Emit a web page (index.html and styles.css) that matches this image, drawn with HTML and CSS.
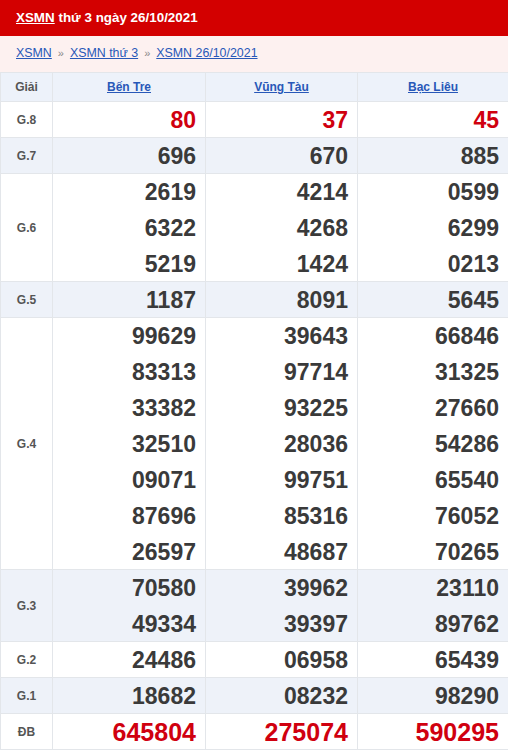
FILE: index.html
```html
<!DOCTYPE html>
<html lang="vi">
<head>
<meta charset="utf-8">
<link rel="stylesheet" href="styles.css">
</head>
<body>
<div class="box">
  <h2 class="title"><a href="#">XSMN</a> thứ 3 ngày 26/10/2021</h2>
  <div class="crumbs">
    <a href="#">XSMN</a><span class="sep">»</span><a href="#">XSMN thứ 3</a><span class="sep">»</span><a href="#">XSMN 26/10/2021</a>
  </div>
  <table class="kq">
    <colgroup><col class="c0"><col class="c1"><col class="c2"><col class="c3"></colgroup>
    <thead>
      <tr><th>Giải</th><th><a href="#">Bến Tre</a></th><th><a href="#">Vũng Tàu</a></th><th><a href="#">Bạc Liêu</a></th></tr>
    </thead>
    <tbody>
      <tr><td class="g">G.8</td><td class="n red"><div>80</div></td><td class="n red"><div>37</div></td><td class="n red"><div>45</div></td></tr>
      <tr class="alt"><td class="g">G.7</td><td class="n"><div>696</div></td><td class="n"><div>670</div></td><td class="n"><div>885</div></td></tr>
      <tr><td class="g">G.6</td><td class="n"><div>2619</div><div>6322</div><div>5219</div></td><td class="n"><div>4214</div><div>4268</div><div>1424</div></td><td class="n"><div>0599</div><div>6299</div><div>0213</div></td></tr>
      <tr class="alt"><td class="g">G.5</td><td class="n"><div>1187</div></td><td class="n"><div>8091</div></td><td class="n"><div>5645</div></td></tr>
      <tr><td class="g">G.4</td>
        <td class="n"><div>99629</div><div>83313</div><div>33382</div><div>32510</div><div>09071</div><div>87696</div><div>26597</div></td>
        <td class="n"><div>39643</div><div>97714</div><div>93225</div><div>28036</div><div>99751</div><div>85316</div><div>48687</div></td>
        <td class="n"><div>66846</div><div>31325</div><div>27660</div><div>54286</div><div>65540</div><div>76052</div><div>70265</div></td></tr>
      <tr class="alt"><td class="g">G.3</td><td class="n"><div>70580</div><div>49334</div></td><td class="n"><div>39962</div><div>39397</div></td><td class="n"><div>23110</div><div>89762</div></td></tr>
      <tr><td class="g">G.2</td><td class="n"><div>24486</div></td><td class="n"><div>06958</div></td><td class="n"><div>65439</div></td></tr>
      <tr class="alt"><td class="g">G.1</td><td class="n"><div>18682</div></td><td class="n"><div>08232</div></td><td class="n"><div>98290</div></td></tr>
      <tr><td class="g">ĐB</td><td class="n red db"><div>645804</div></td><td class="n red db"><div>275074</div></td><td class="n red db"><div>590295</div></td></tr>
    </tbody>
  </table>
</div>
</body>
</html>
```
FILE: styles.css
```css
html, body {
  margin: 0;
  padding: 0;
  background: #ffffff;
  font-family: "Liberation Sans", Arial, sans-serif;
}
.box {
  width: 508px;
}
.title {
  margin: 0;
  height: 36px;
  line-height: 35px;
  padding: 0 16px;
  background: #d30000;
  color: #ffffff;
  font-size: 13.4px;
  font-weight: bold;
}
.title a {
  color: #ffffff;
  text-decoration: underline;
}
.crumbs {
  height: 36px;
  line-height: 35px;
  padding: 0 16px;
  background: #fdf1f0;
  font-size: 12.4px;
}
.crumbs a {
  color: #2858b8;
  text-decoration: underline;
}
.crumbs .sep {
  color: #888888;
  margin: 0 6px;
  font-size: 11px;
}
.kq {
  width: 508px;
  border-collapse: collapse;
  table-layout: fixed;
}
.c0 { width: 52px; }
.c1 { width: 153px; }
.c2 { width: 152px; }
.c3 { width: 151px; }
.kq th, .kq td {
  border: 1px solid #e3e6ea;
  padding: 0;
}
.kq thead th {
  height: 28px;
  background: #edf2fa;
  font-size: 12px;
  font-weight: normal;
  color: #555555;
  text-align: center;
}
.kq thead th a {
  color: #2858b8;
  font-weight: bold;
  text-decoration: underline;
}
.kq thead th:first-child {
  font-weight: bold;
}
.kq tr.alt td {
  background: #eef2f9;
}
.g {
  text-align: center;
  font-size: 12px;
  color: #555555;
  font-weight: bold;
}
.n {
  text-align: right;
  padding-right: 9px !important;
  font-size: 23px;
  font-weight: bold;
  color: #3a3a3a;
}
.n div {
  height: 36px;
  line-height: 37px;
}
.n div:last-child {
  height: 35px;
}
.n.red {
  color: #d0000f;
}
.n.db {
  font-size: 25px;
}
```
